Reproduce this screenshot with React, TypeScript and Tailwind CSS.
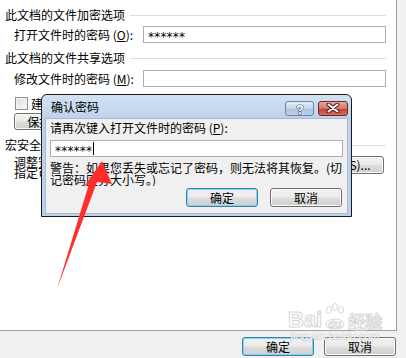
import React from 'react';

const WinButton = ({
  children,
  focused,
  className,
}: {
  children: React.ReactNode;
  focused?: boolean;
  className?: string;
}) => (
  <div
    className={
      'flex items-center justify-center rounded-[3px] border text-[12px] leading-none text-black bg-[linear-gradient(#f2f2f2_0%,#ebebeb_48%,#dddddd_52%,#cfcfcf_100%)] ' +
      (focused
        ? 'border-[#3c7fb1] shadow-[inset_0_0_0_1px_#7fd3f7] '
        : 'border-[#707070] shadow-[inset_0_0_0_1px_#fbfbfb] ') +
      (className || '')
    }
  >
    {children}
  </div>
);

const SectionHeader = ({ title }: { title: string }) => (
  <div className="flex h-[12px] items-center pl-[5px] pr-[10px]">
    <span className="whitespace-nowrap leading-[12px]">{title}</span>
    <div className="ml-[5px] h-px flex-1 bg-[#d5dfe5]" />
  </div>
);

const Stars = () => (
  <span className="pt-[4px] text-[12px] leading-[12px] tracking-[0.2px] font-['DejaVu_Sans',sans-serif]">******</span>
);

const PasswordRow = ({ label, accel, filled }: { label: string; accel: string; filled?: boolean }) => (
  <div className="flex h-[17px] items-center pl-[14px] pr-[10px]">
    <span className="w-[129px] whitespace-nowrap leading-[12px]">
      {label} (<span className="underline">{accel}</span>):
    </span>
    <div className="flex h-[17px] flex-1 items-center border border-[#abadb3] bg-white pl-[4px]">
      {filled && <Stars />}
    </div>
  </div>
);

export default function App() {
  return (
    <div className="relative h-[358px] w-[406px] overflow-hidden bg-[#f0f0f0] text-[12px] text-black font-['Noto_Sans_CJK_SC','Noto_Sans',sans-serif]">
      {/* options panel */}
      <div className="h-[331px] w-[397px] border-b border-r border-[#a0a0a0] bg-white">
        <div className="pt-[9px]">
          <SectionHeader title="此文档的文件加密选项" />
        </div>
        <div className="mt-[5px]">
          <PasswordRow label="打开文件时的密码" accel="O" filled />
        </div>
        <div className="mt-[9px]">
          <SectionHeader title="此文档的文件共享选项" />
        </div>
        <div className="mt-[6px]">
          <PasswordRow label="修改文件时的密码" accel="M" />
        </div>
        <div className="mt-[10px] flex h-[13px] items-center pl-[15px]">
          <div className="h-[13px] w-[13px] border border-[#8f8f8f] bg-[linear-gradient(135deg,#dcdcdc,#fbfbfb)] shadow-[inset_0_0_0_1px_#f4f4f4]" />
          <span className="ml-[3px] whitespace-nowrap leading-[12px]">
            建议以只读方式打开文档(<span className="underline">E</span>)
          </span>
        </div>
        <div className="mt-[3px] pl-[14px]">
          <WinButton className="h-[17px] w-[100px]">保护文档(P)...</WinButton>
        </div>
        <div className="mt-[9px]">
          <SectionHeader title="宏安全性" />
        </div>
        <div className="mt-[5px] flex items-start pl-[14px] pr-[12px]">
          <div className="flex-1 leading-[11px]">
            <div className="whitespace-nowrap">调整安全级别以打开可能包含宏病毒的文件，并</div>
            <div className="whitespace-nowrap">指定可信任的宏创建者姓名。</div>
          </div>
          <WinButton className="h-[18px] w-[100px]">宏安全性(S)...</WinButton>
        </div>
      </div>

      {/* footer buttons */}
      <div className="flex justify-end gap-[10px] pr-[10px] pt-[6px]">
        <WinButton focused className="h-[19px] w-[72px]">
          确定
        </WinButton>
        <WinButton className="h-[19px] w-[72px]">取消</WinButton>
      </div>

      {/* confirm password dialog */}
      <div className="absolute left-[41px] top-[94px] flex h-[123px] w-[311px] flex-col rounded-t-[6px] border border-[#1a1a1a] bg-[linear-gradient(#d3e2f3,#bcd2ea_24px,#b9d1ea)] px-[3px] pb-[2px]">
        <div className="flex h-[23px] items-center justify-between pl-[6px]">
          <span className="leading-[12px]">确认密码</span>
          <div className="mt-[3px] flex gap-[4px]">
            <div className="flex h-[15px] w-[29px] items-center justify-center rounded-[3px] border border-[#6d86a5] bg-[linear-gradient(#e3ecf7,#c3d5ea_50%,#a9c1de_51%,#bcd1ea)]">
              <svg width="12" height="13" viewBox="0 0 12 13">
                <text
                  x="6"
                  y="11.5"
                  textAnchor="middle"
                  fontSize="13"
                  fontWeight="bold"
                  fontFamily="Liberation Sans, sans-serif"
                  fill="#ffffff"
                  stroke="#3b4a5c"
                  strokeWidth="1"
                  paintOrder="stroke"
                >
                  ?
                </text>
              </svg>
            </div>
            <div className="flex h-[15px] w-[30px] items-center justify-center rounded-[3px] border border-[#6d2a23] bg-[linear-gradient(#e9a99e,#d47667_50%,#c1402f_51%,#d5705e)]">
              <svg width="14" height="10" viewBox="0 0 14 10">
                <path d="M2.5 1.5 L11.5 8.5 M11.5 1.5 L2.5 8.5" stroke="#4a1a14" strokeWidth="4" strokeLinecap="round" />
                <path d="M2.5 1.5 L11.5 8.5 M11.5 1.5 L2.5 8.5" stroke="#ffffff" strokeWidth="2" strokeLinecap="round" />
              </svg>
            </div>
          </div>
        </div>
        <div className="flex flex-1 flex-col border border-[#a7bad0] bg-[#f0f0f0] px-[4px] pt-[3px]">
          <div className="whitespace-nowrap leading-[12px]">
            请再次键入打开文件时的密码 (<span className="underline">P</span>):
          </div>
          <div className="mt-[6px] flex h-[17px] items-center border border-[#abadb3] bg-white pl-[4px]">
            <Stars />
            <span className="ml-px h-[13px] w-px bg-black" />
          </div>
          <div className="mt-[5px] overflow-hidden leading-[12px]">
            <div className="whitespace-nowrap">警告：如果您丢失或忘记了密码，则无法将其恢复。(切</div>
            <div className="whitespace-nowrap">记密码区分大小写。)</div>
          </div>
          <div className="mt-[2px] flex justify-end gap-[12px] pr-px">
            <WinButton focused className="h-[19px] w-[72px]">
              确定
            </WinButton>
            <WinButton className="h-[19px] w-[72px]">取消</WinButton>
          </div>
        </div>
      </div>

      {/* red annotation arrow */}
      <svg className="pointer-events-none absolute left-0 top-0" width="406" height="358" viewBox="0 0 406 358">
        <polygon points="57,289 89,184 84,187 102,161 112,184 97,182" fill="#ff2d2d" />
      </svg>

      {/* watermark */}
      <div className="pointer-events-none absolute left-[288px] top-[303px] flex flex-col items-center">
        <div className="flex items-end">
          <span className="text-[22px] font-bold leading-[22px] text-white font-['Liberation_Sans',sans-serif] [-webkit-text-stroke:1px_#d6d6d6]">
            Bai
          </span>
          <svg width="24" height="28" viewBox="0 0 24 28" className="mx-[1px]">
            <g fill="#ffffff" stroke="#d6d6d6" strokeWidth="1">
              <ellipse cx="6" cy="7" rx="2.5" ry="3.5" />
              <ellipse cx="12" cy="4" rx="2.5" ry="3.5" />
              <ellipse cx="18" cy="7" rx="2.5" ry="3.5" />
              <path d="M3 22 C3 14 21 14 21 22 C21 27 3 27 3 22 Z" />
            </g>
            <text x="12" y="25" textAnchor="middle" fontSize="11" fontWeight="bold" fontFamily="Liberation Sans, sans-serif" fill="#ffffff" stroke="#d6d6d6" strokeWidth="0.8">
              du
            </text>
          </svg>
          <span className="text-[17px] font-bold leading-[20px] text-white [-webkit-text-stroke:1px_#d6d6d6]">经验</span>
        </div>
        <span className="text-[11px] leading-[11px] text-white font-['Liberation_Sans',sans-serif] [-webkit-text-stroke:0.6px_#dcdcdc]">
          jingyan.baidu.com
        </span>
      </div>
    </div>
  );
}
